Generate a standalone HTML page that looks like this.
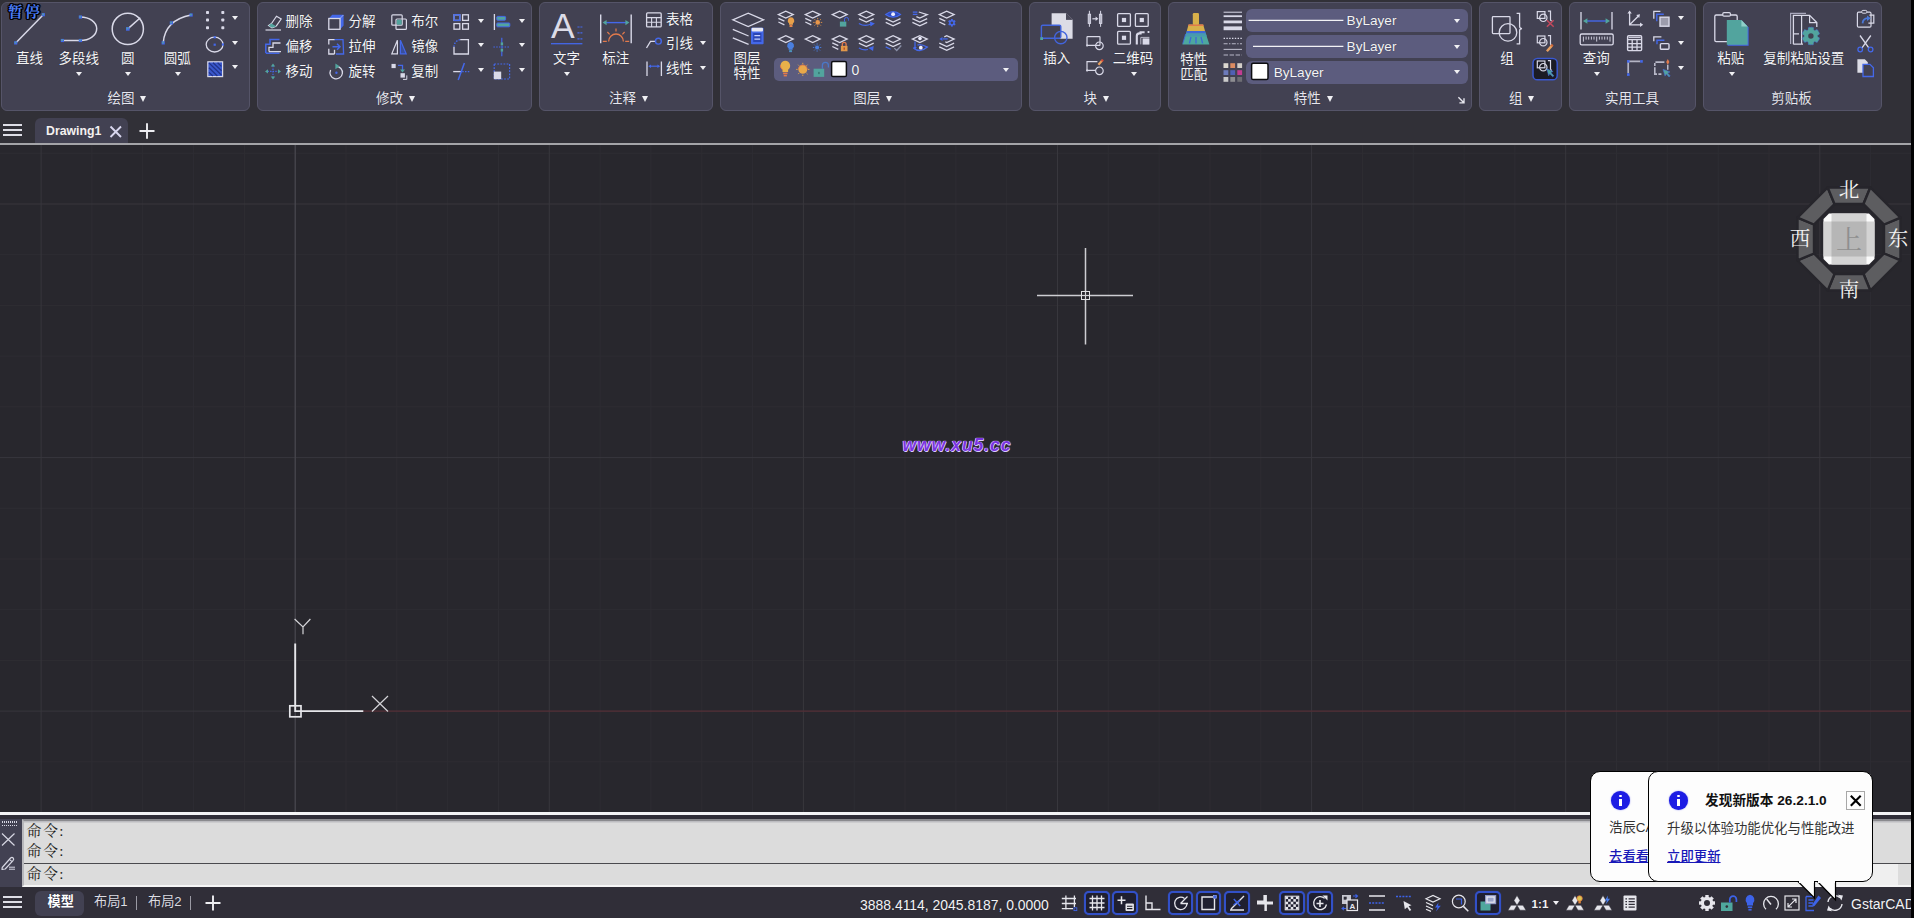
<!DOCTYPE html><html lang="zh-CN"><head><meta charset="utf-8"><title>GstarCAD - Drawing1</title><style>
*{box-sizing:border-box;margin:0;padding:0}
html,body{width:1914px;height:918px;overflow:hidden;background:#313037;}
body{position:relative;font-family:"Liberation Sans","Noto Sans CJK SC",sans-serif;color:#f2f2f4;font-size:13.5px;}
.abs{position:absolute}
.panel{position:absolute;top:2px;height:109px;background:#424152;border:1px solid #555468;border-radius:6px;}
.t{position:absolute;white-space:nowrap;line-height:16px;height:16px;color:#f4f4f6;font-size:13.5px;text-shadow:0 0 1px rgba(20,20,30,.6);}
.tc{transform:translateX(-50%);}
.arr{position:absolute;width:0;height:0;border-left:3.5px solid transparent;border-right:3.5px solid transparent;border-top:4px solid #f0f0f4;}
.arrb{position:absolute;width:0;height:0;border-left:3.4px solid transparent;border-right:3.4px solid transparent;border-top:6.2px solid #f0f0f4;}
svg{position:absolute;overflow:visible}
.combo{position:absolute;background:#5c5c7e;border-radius:5px;}
</style></head><body>
<div class="abs" style="left:0;top:0;width:1914px;height:116px;background:#313037"></div>
<div class="panel" style="left:1px;width:249px"></div>
<div class="panel" style="left:257px;width:275px"></div>
<div class="panel" style="left:539px;width:174px"></div>
<div class="panel" style="left:720px;width:302px"></div>
<div class="panel" style="left:1029px;width:132px"></div>
<div class="panel" style="left:1168px;width:304px"></div>
<div class="panel" style="left:1479px;width:83px"></div>
<div class="panel" style="left:1569px;width:127px"></div>
<div class="panel" style="left:1703px;width:179px"></div>
<div class="combo" style="left:773.8px;top:58px;width:244.4px;height:23.4px"></div>
<div class="combo" style="left:1246.2px;top:8.9px;width:221.8px;height:23.2px;border-radius:6px"></div>
<div class="combo" style="left:1246.2px;top:34.8px;width:221.8px;height:23.2px;border-radius:6px"></div>
<div class="combo" style="left:1246.2px;top:60.5px;width:221.8px;height:23.2px;border-radius:6px"></div>
<svg style="left:0;top:0" width="1914" height="116" viewBox="0 0 1914 116"><path d="M15.7 42.9L43.3 14.7" stroke="#d9d9e8" stroke-width="1.5" fill="none" /><rect x="14.1" y="41.3" width="3.2" height="3.2" fill="#4468ea"/><rect x="14.7" y="41.699999999999996" width="1.6" height="1.6" fill="#52a49e"/><rect x="41.699999999999996" y="13.1" width="3.2" height="3.2" fill="#4468ea"/><rect x="42.3" y="13.5" width="1.6" height="1.6" fill="#52a49e"/><path d="M62.4 40.5H80.4A16.3 11.75 0 0 0 80.4 17" stroke="#d9d9e8" stroke-width="1.5" fill="none" /><rect x="60.8" y="38.9" width="3.2" height="3.2" fill="#4468ea"/><rect x="61.4" y="39.3" width="1.6" height="1.6" fill="#52a49e"/><rect x="78.80000000000001" y="38.9" width="3.2" height="3.2" fill="#4468ea"/><rect x="79.4" y="39.3" width="1.6" height="1.6" fill="#52a49e"/><rect x="78.80000000000001" y="15.4" width="3.2" height="3.2" fill="#4468ea"/><rect x="79.4" y="15.8" width="1.6" height="1.6" fill="#52a49e"/><circle cx="127.8" cy="28.9" r="15.6" stroke="#d9d9e8" stroke-width="1.5" fill="none" /><path d="M127.8 28.9L140.3 17.7" stroke="#d9d9e8" stroke-width="1.5" fill="none" /><rect x="126.0" y="27.099999999999998" width="3.6" height="3.6" fill="#4468ea"/><rect x="126.6" y="27.499999999999996" width="1.8" height="1.8" fill="#52a49e"/><path d="M163.2 42.9Q165 20 191.1 15" stroke="#d9d9e8" stroke-width="1.5" fill="none" /><rect x="161.6" y="41.3" width="3.2" height="3.2" fill="#4468ea"/><rect x="162.2" y="41.699999999999996" width="1.6" height="1.6" fill="#52a49e"/><rect x="169.8" y="21.299999999999997" width="3.2" height="3.2" fill="#4468ea"/><rect x="170.4" y="21.699999999999996" width="1.6" height="1.6" fill="#52a49e"/><rect x="189.5" y="13.4" width="3.2" height="3.2" fill="#4468ea"/><rect x="190.1" y="13.8" width="1.6" height="1.6" fill="#52a49e"/><rect x="206.0" y="11.0" width="3" height="3" rx=".8" fill="#d9d9e8"/><rect x="206.0" y="18.5" width="3" height="3" rx=".8" fill="#d9d9e8"/><rect x="206.0" y="26.2" width="3" height="3" rx=".8" fill="#d9d9e8"/><rect x="221.3" y="11.0" width="3" height="3" rx=".8" fill="#d9d9e8"/><rect x="221.3" y="18.5" width="3" height="3" rx=".8" fill="#d9d9e8"/><rect x="221.3" y="26.2" width="3" height="3" rx=".8" fill="#d9d9e8"/><ellipse cx="214.6" cy="44.6" rx="8.4" ry="7.4" fill="none" stroke="#d9d9e8" stroke-width="1.3"/><rect x="213.6" y="43.6" width="2.2" height="2.2" fill="#4468ea"/><rect x="213.6" y="36.2" width="2.2" height="2.2" fill="#4468ea"/><rect x="221.8" y="43.4" width="2.2" height="2.2" fill="#4468ea"/><rect x="207.8" y="61.8" width="14.8" height="14.8" fill="#3a58cc" stroke="#d9d9e8" stroke-width="1.2"/><path d="M221.4 66.4L217.6 62.8M221.6 70.8L213 62.8M221.4 75L209 63M217.4 76L209 67.8M212.8 76L209 72.4" stroke="#22338a" stroke-width="1.25" fill="none" /><g transform="translate(265 14) scale(1)"><path d="M6.5 9.5L11.5 2.2L16.2 5L11.2 12.2M6.5 9.5L3.6 11.4L7 13.8L11.2 12.2" stroke="#d9d9e8" stroke-width="1.2" fill="none" /><path d="M3.6 11.4L6.5 9.5L11.2 12.2L7 13.8Z" fill="#52a49e"/><path d="M0.5 16H16" stroke="#d9d9e8" stroke-width="1.2" fill="none" /></g><g transform="translate(265 38.8) scale(1)"><path d="M0.8 14.2V5.5H5V0.8H14.5" stroke="#4468ea" stroke-width="1.5" fill="none" /><path d="M0.8 14.4H14.5" stroke="#4468ea" stroke-width="1.5" fill="none" /><path d="M4 12.8V8.5H8V4.2H15.5M4 12.8H16" stroke="#d9d9e8" stroke-width="1.3" fill="none" /></g><g transform="translate(265 63.400000000000006) scale(1)"><path d="M8 2.5V13.5M2.5 8H13.5" stroke="#4468ea" stroke-width="1.2" fill="none" stroke-dasharray="1.4 1.2"/><path d="M8 0L10.2 3H5.8ZM8 16L10.2 13H5.8ZM0 8L3 5.8V10.2ZM16 8L13 5.8V10.2Z" fill="#52a49e"/></g><g transform="translate(328 14) scale(1)"><path d="M0.8 4.5L4.2 0.8H15.6V11.5L12 15.4V4.5Z" fill="#4468ea"/><path d="M12 4.5L15.4 1" stroke="#9fb2f4" stroke-width="0.9" fill="none" /><rect x="0.8" y="4.5" width="11.2" height="10.8" rx="0" stroke="#d9d9e8" stroke-width="1.3" fill="#424152" /></g><g transform="translate(328 38.8) scale(1)"><path d="M6 0.8H15L15.6 15.2H8" stroke="#4468ea" stroke-width="1.3" fill="none" /><path d="M6.5 0.8H0.8V5.6M0.8 10V15.2H6.5M6.5 11V15.2" stroke="#d9d9e8" stroke-width="1.3" fill="none" /><path d="M4.5 8H11.5M9 5L12 8L9 11" stroke="#4468ea" stroke-width="1.5" fill="none" /></g><g transform="translate(328 63.400000000000006) scale(1)"><path d="M8.2 3A6.2 6.2 0 1 1 2.6 6.6" stroke="#d9d9e8" stroke-width="1.3" fill="none" /><path d="M7.4 0L11.6 2.8L7.4 5.8Z" fill="#52a49e"/><circle cx="8.4" cy="9.4" r="1.2" fill="#4468ea"/></g><g transform="translate(391 14) scale(1)"><rect x="0.8" y="0.8" width="10.4" height="10.4" rx="1" stroke="#d9d9e8" stroke-width="1.2" fill="none" /><rect x="5" y="5" width="10.4" height="10.4" rx="1" stroke="#d9d9e8" stroke-width="1.2" fill="none" /><rect x="5.8" y="5.8" width="4.8" height="4.8" fill="#52a49e"/></g><g transform="translate(391 38.8) scale(1)"><path d="M6.4 1.5V15H0.8Z" stroke="#d9d9e8" stroke-width="1.2" fill="none" /><path d="M9.4 1.5V15H15.2Z" stroke="#4468ea" stroke-width="1.2" fill="#3a4f9c" /></g><g transform="translate(391 63.400000000000006) scale(1)"><rect x="0.5" y="0.5" width="4.2" height="4.2" fill="#d9d9e8"/><rect x="9.5" y="9.8" width="4.4" height="4.4" fill="#d9d9e8"/><path d="M7 2H11.5V7" stroke="#4468ea" stroke-width="1.3" fill="none" /><path d="M9 6L11.5 9L14 6Z" fill="#52a49e"/><path d="M12 16H15.8V12" stroke="#d9d9e8" stroke-width="1" fill="none" /></g><g transform="translate(453.2 14) scale(1)"><rect x="0.8" y="0.8" width="5.8" height="5.6" rx="0" stroke="#d9d9e8" stroke-width="1.3" fill="none" /><rect x="9.4" y="0.8" width="5.8" height="5.6" rx="0" stroke="#d9d9e8" stroke-width="1.3" fill="none" /><rect x="0.8" y="9.6" width="5.8" height="5.6" rx="0" stroke="#d9d9e8" stroke-width="1.3" fill="none" /><rect x="9.4" y="9.6" width="5.8" height="5.6" rx="0" stroke="#d9d9e8" stroke-width="1.3" fill="none" /><rect x="0.8" y="0.8" width="5.8" height="5.6" rx="0" stroke="#4468ea" stroke-width="1.4" fill="none" /></g><g transform="translate(453.2 38.8) scale(1)"><path d="M7 0.8H15.2V15.2H0.8V8" stroke="#d9d9e8" stroke-width="1.3" fill="none" /><path d="M0.8 8A7.2 7.2 0 0 1 7 0.8" stroke="#4468ea" stroke-width="1.3" fill="none" stroke-dasharray="1.6 1.2"/></g><g transform="translate(453.2 63.400000000000006) scale(1)"><path d="M0 8.2H8" stroke="#d9d9e8" stroke-width="1.3" fill="none" /><path d="M9 8.2H16.5" stroke="#4468ea" stroke-width="1.2" fill="none" stroke-dasharray="1.5 1.3"/><path d="M11.2 -0.5L5 16.5" stroke="#4468ea" stroke-width="1.5" fill="none" /></g><g transform="translate(493.4 14) scale(1)"><path d="M1 0V16" stroke="#d9d9e8" stroke-width="1.3" fill="none" /><rect x="3.4" y="2.4" width="8.8" height="3.8" rx=".8" fill="#52a49e" stroke="#4468ea" stroke-width="1"/><rect x="3.4" y="9" width="13" height="3.8" rx=".8" fill="#52a49e" stroke="#4468ea" stroke-width="1"/></g><g transform="translate(493.4 38.8) scale(1)"><path d="M0 8.2H16.6" stroke="#4468ea" stroke-width="1.1" fill="none" stroke-dasharray="1.5 1.3"/><path d="M8.4 -1V4M8.4 12.4V17.5" stroke="#4468ea" stroke-width="1.2" fill="none" /><rect x="7.3" y="3.6" width="2.4" height="3" fill="#52a49e"/><rect x="7.3" y="9.8" width="2.4" height="3" fill="#52a49e"/><path d="M8.5 6.8V9.6" stroke="#4468ea" stroke-width="1" fill="none" /></g><g transform="translate(493.4 63.400000000000006) scale(1)"><rect x="0.8" y="0.6" width="15.4" height="15" rx="0" stroke="#4468ea" stroke-width="1.2" fill="none" stroke-dasharray="1.8 1.3"/><rect x="0.4" y="8.2" width="7.4" height="7.6" fill="#d9d9e8"/></g><path d="M577.4 27H582.4M577.4 32.8H582.4M577.4 38.8H582.4" stroke="#4468ea" stroke-width="1.2" fill="none" stroke-dasharray="2.2 0.8"/><path d="M551 43.7H582.4" stroke="#4468ea" stroke-width="1.3" fill="none" /><path d="M600.7 14.4V43.2M631.2 14.4V43.2" stroke="#d9d9e8" stroke-width="1.4" fill="none" /><path d="M605 22.6H627" stroke="#4468ea" stroke-width="1.4" fill="none" /><path d="M602.6 22.6L606.6 20V25.2ZM629.4 22.6L625.4 20V25.2Z" fill="#52a49e"/><path d="M608.6 41.4A7.4 7.4 0 0 1 623.4 41.4" stroke="#e27a4c" stroke-width="1.3" fill="none" /><path d="M616 28.6V31.6M607.4 32L609.6 34.4M624.6 32L622.4 34.4M602.8 41.4H606.8M625.2 41.4H629.2" stroke="#e27a4c" stroke-width="1.2" fill="none" /><rect x="646.6" y="12.9" width="14.6" height="14" rx="1" stroke="#d9d9e8" stroke-width="1.3" fill="none" /><path d="M646.6 17.6H661.2M646.6 22.2H661.2M651.6 17.6V26.9M656.4 17.6V26.9" stroke="#d9d9e8" stroke-width="1.1" fill="none" /><path d="M646.5 48L650.5 41.4H656" stroke="#d9d9e8" stroke-width="1.3" fill="none" /><circle cx="658.4" cy="41.2" r="2.9" stroke="#4468ea" stroke-width="1.4" fill="none" /><path d="M647 61.5V76M661.4 61.5V76" stroke="#d9d9e8" stroke-width="1.3" fill="none" /><path d="M650 66.2H658.4" stroke="#4468ea" stroke-width="1.2" fill="none" /><path d="M648.2 66.2L651 64.4V68ZM660.2 66.2L657.4 64.4V68Z" fill="#4468ea"/><path d="M732.8 19.8L748.2 13.2L763.6 19.8L748.2 26.6Z" stroke="#d9d9e8" stroke-width="1.3" fill="none" /><path d="M732.8 29.4L748.6 36M732.8 37.8L748.6 44.4" stroke="#d9d9e8" stroke-width="1.3" fill="none" /><rect x="751" y="27.8" width="12.6" height="16.4" rx="1" fill="#4468ea"/><rect x="751.6" y="27.8" width="11.4" height="3.6" rx="1" fill="#e8e8f2"/><rect x="753.2" y="33" width="8.2" height="9" fill="#2b45b5"/><path d="M754.4 35.6H760.2M754.4 39.2H760.2" stroke="#c8d2ff" stroke-width="1.2" fill="none" /><g transform="translate(786.4 19) scale(1)"><path d="M-8 -4.4L-0.6 -7.8L6.8 -4.4L-0.6 -1Z" stroke="#d9d9e8" stroke-width="1.3" fill="none" /><path d="M-8 -0.6L-2 2.2M-8 3L-2 5.8" stroke="#d9d9e8" stroke-width="1.3" fill="none" /><g transform="translate(4.6 3.2) scale(1.15)"><path d="M0 -4.2A2.9 2.9 0 0 1 1.7 1V2.2H-1.7V1A2.9 2.9 0 0 1 0 -4.2Z" fill="#e8a04a"/><rect x="-1.2" y="2.8" width="2.4" height="1.4" fill="#e8a04a"/></g><rect x="3.4" y="6" width="2.4" height="1.6" fill="#e27a4c"/></g><g transform="translate(813.3 19) scale(1)"><path d="M-8 -4.4L-0.6 -7.8L6.8 -4.4L-0.6 -1Z" stroke="#d9d9e8" stroke-width="1.3" fill="none" /><path d="M-8 -0.6L-2 2.2M-8 3L-2 5.8" stroke="#d9d9e8" stroke-width="1.3" fill="none" /><g transform="translate(4.4 3.4) scale(1)"><circle r="2.3" fill="#e8964a"/><path d="M3.10 0.00L4.50 0.00M2.19 2.19L3.18 3.18M0.00 3.10L0.00 4.50M-2.19 2.19L-3.18 3.18M-3.10 0.00L-4.50 0.00M-2.19 -2.19L-3.18 -3.18M-0.00 -3.10L-0.00 -4.50M2.19 -2.19L3.18 -3.18" stroke="#e8964a" stroke-width="0.9" fill="none" /></g></g><g transform="translate(840.3 19) scale(1)"><path d="M-8 -4.4L-0.6 -7.8L6.8 -4.4L-0.6 -1Z" stroke="#d9d9e8" stroke-width="1.3" fill="none" /><rect x="-0.4" y="2.6" width="6.4" height="5" fill="#52a49e"/><path d="M4.2 2.6V0.4A2 2 0 0 1 8.2 0.4V1.6" stroke="#4468ea" stroke-width="1" fill="none" /></g><g transform="translate(866.9 19) scale(1)"><path d="M-8 -4.4L-0.6 -7.8L6.8 -4.4L-0.6 -1Z" stroke="#d9d9e8" stroke-width="1.3" fill="none" /><path d="M-8 -0.4L-0.6 3L6.8 -0.4" stroke="#d9d9e8" stroke-width="1.3" fill="none" /><path d="M-8 4.4Q-2 8 4 5" stroke="#4468ea" stroke-width="1.2" fill="none" /><path d="M3 2.4L8 4.4L3.6 7.4Z" fill="#4468ea"/></g><g transform="translate(893.7 19) scale(1)"><path d="M-8 -4.6Q-0.6 -10.4 6.8 -4.6Q-0.6 1 -8 -4.6Z" stroke="#4468ea" stroke-width="1.2" fill="#2f4cc0" /><circle cx="-0.6" cy="-4.8" r="1.9" fill="#eef"/><path d="M-8 -0.4L-0.6 3L6.8 -0.4M-8 3.4L-0.6 6.8L6.8 3.4" stroke="#d9d9e8" stroke-width="1.3" fill="none" /></g><g transform="translate(920.4 19) scale(1)"><path d="M-7.6 -6.8H-3M-7.6 -4.6H-3" stroke="#4468ea" stroke-width="1.3" fill="none" /><path d="M-1.6 -7L6.8 -4.4L-0.6 -1L-4 -2.4" stroke="#d9d9e8" stroke-width="1.3" fill="none" /><path d="M-8 -0.4L-0.6 3L6.8 -0.4M-8 3.4L-0.6 6.8L6.8 3.4" stroke="#d9d9e8" stroke-width="1.3" fill="none" /></g><g transform="translate(947.3 19) scale(1)"><path d="M-8 -4.4L-0.6 -7.8L6.8 -4.4L-0.6 -1Z" stroke="#d9d9e8" stroke-width="1.3" fill="none" /><path d="M-8 -0.6L-2 2.2M-8 3L-2 5.8" stroke="#d9d9e8" stroke-width="1.3" fill="none" /><g transform="translate(4.6 3.8) scale(1)"><rect x="-0.9" y="-3.8" width="1.8" height="2" fill="#4468ea" transform="rotate(0)"/><rect x="-0.9" y="-3.8" width="1.8" height="2" fill="#4468ea" transform="rotate(60)"/><rect x="-0.9" y="-3.8" width="1.8" height="2" fill="#4468ea" transform="rotate(120)"/><rect x="-0.9" y="-3.8" width="1.8" height="2" fill="#4468ea" transform="rotate(180)"/><rect x="-0.9" y="-3.8" width="1.8" height="2" fill="#4468ea" transform="rotate(240)"/><rect x="-0.9" y="-3.8" width="1.8" height="2" fill="#4468ea" transform="rotate(300)"/><circle r="2.1" fill="none" stroke="#4468ea" stroke-width="1.4"/></g></g><g transform="translate(786.4 43.5) scale(1)"><path d="M-8 -4.4L-0.6 -7.8L6.8 -4.4L-0.6 -1Z" stroke="#d9d9e8" stroke-width="1.3" fill="none" /><g transform="translate(4.2 3.6) scale(1.2)"><path d="M0 -4.2A2.9 2.9 0 0 1 1.7 1V2.2H-1.7V1A2.9 2.9 0 0 1 0 -4.2Z" fill="#4a7fe0"/><rect x="-1.2" y="2.8" width="2.4" height="1.4" fill="#4a7fe0"/></g><rect x="3" y="6.8" width="2.4" height="1.2" fill="#52a49e"/></g><g transform="translate(813.3 43.5) scale(1)"><path d="M-8 -4.4L-0.6 -7.8L6.8 -4.4L-0.6 -1Z" stroke="#d9d9e8" stroke-width="1.3" fill="none" /><g transform="translate(3.8 4) scale(1)"><circle r="2" fill="#4a7fe0"/><path d="M2.80 0.00L4.20 0.00M1.98 1.98L2.97 2.97M0.00 2.80L0.00 4.20M-1.98 1.98L-2.97 2.97M-2.80 0.00L-4.20 0.00M-1.98 -1.98L-2.97 -2.97M-0.00 -2.80L-0.00 -4.20M1.98 -1.98L2.97 -2.97" stroke="#4a7fe0" stroke-width="0.9" fill="none" /></g></g><g transform="translate(840.3 43.5) scale(1)"><path d="M-8 -4.4L-0.6 -7.8L6.8 -4.4L-0.6 -1Z" stroke="#d9d9e8" stroke-width="1.3" fill="none" /><path d="M-8 -0.6L-2 2.2M-8 3L-2 5.8" stroke="#d9d9e8" stroke-width="1.3" fill="none" /><rect x="0.6" y="2.4" width="6.6" height="5.4" fill="#e0984a"/><path d="M2 2.4V0.8A1.9 1.9 0 0 1 5.8 0.8V2.4" stroke="#e27a4c" stroke-width="1.3" fill="none" /><rect x="3.3" y="4" width="1.2" height="2.2" fill="#b04020"/></g><g transform="translate(866.9 43.5) scale(1)"><path d="M-8 -4.4L-0.6 -7.8L6.8 -4.4L-0.6 -1Z" stroke="#d9d9e8" stroke-width="1.3" fill="none" /><path d="M-8 -0.4L-0.6 3L6.8 -0.4" stroke="#d9d9e8" stroke-width="1.3" fill="none" /><path d="M-8 4.4Q-3 7.4 1 6" stroke="#4468ea" stroke-width="1.2" fill="none" /><path d="M6.8 2.6L1.4 4.6L6.2 7.6Z" fill="#4468ea"/></g><g transform="translate(893.7 43.5) scale(1)"><path d="M-8 -4.4L-0.6 -7.8L6.8 -4.4L-0.6 -1Z" stroke="#d9d9e8" stroke-width="1.3" fill="none" /><path d="M-8 -0.4L-0.6 3L6.8 -0.4" stroke="#d9d9e8" stroke-width="1.3" fill="none" /><path d="M-8 3.4L-3 5.8" stroke="#4468ea" stroke-width="1.2" fill="none" /><path d="M0.6 4.6L3 7L7.6 2" stroke="#8a90a8" stroke-width="1.3" fill="none" /></g><g transform="translate(920.4 43.5) scale(1)"><path d="M-8 -4.4L-0.6 -7.8L6.8 -4.4L-0.6 -1Z" stroke="#d9d9e8" stroke-width="1.3" fill="none" /><circle cx="-0.4" cy="-5" r="1.8" fill="#eef"/><path d="M-5.4 -2V4" stroke="#4468ea" stroke-width="1.3" fill="none" /><path d="M-5.4 6L-7.2 3.4H-3.6Z" fill="#4468ea"/><path d="M-7 4.4Q-0.4 10 7 3.6Q0 0 -3 1.6" stroke="#4468ea" stroke-width="1.3" fill="none" /><circle cx="0.4" cy="4.2" r="1.9" fill="#eef"/></g><g transform="translate(947.3 43.5) scale(1)"><path d="M-3 -6.6L-0.6 -7.8L6.8 -4.4L-0.6 -1L-2 -1.8" stroke="#d9d9e8" stroke-width="1.3" fill="none" /><path d="M-4.4 -4.6H0.4" stroke="#4468ea" stroke-width="1.3" fill="none" /><path d="M-8 -4.6L-4.8 -6.6V-2.6Z" fill="#4468ea"/><path d="M-8 -0.4L-0.6 3L6.8 -0.4M-8 3.4L-0.6 6.8L6.8 3.4" stroke="#d9d9e8" stroke-width="1.3" fill="none" /></g><g transform="translate(785.3 68.6) scale(1)"><path d="M0 -7.8A5 5 0 0 1 2.8 1.2V3.4H-2.8V1.2A5 5 0 0 1 0 -7.8Z" fill="#e8b04a"/><path d="M-2.8 1.2Q-5 -1 -4.9 -3.4" stroke="#e27a4c" stroke-width="1" fill="none"/><rect x="-2.2" y="4" width="4.4" height="1.6" fill="#e27a4c"/><rect x="-1.6" y="6.2" width="3.2" height="1.6" fill="#e27a4c"/></g><g transform="translate(802.8 69.4) scale(1)"><circle r="4.4" fill="#e8a84a"/><path d="M5.20 0.00L6.60 0.00M3.68 3.68L4.67 4.67M0.00 5.20L0.00 6.60M-3.68 3.68L-4.67 4.67M-5.20 0.00L-6.60 0.00M-3.68 -3.68L-4.67 -4.67M-0.00 -5.20L-0.00 -6.60M3.68 -3.68L4.67 -4.67" stroke="#e8a84a" stroke-width="0.9" fill="none" /></g><path d="M798.4 69.4A4.4 4.4 0 0 1 807.2 69.4" stroke="#e27a4c" stroke-width="0.9" fill="none" /><g transform="translate(821 69.5) scale(1)"><rect x="-7.4" y="-0.8" width="10.6" height="8.2" fill="#52a49e"/><rect x="-3" y="2.4" width="1.8" height="2.2" fill="#3a7f78"/><path d="M1.4 -0.8V-4.2A3 3 0 0 1 7.4 -4.2V-2" stroke="#4a78c8" stroke-width="1.3" fill="none" /></g><rect x="831.6" y="61.6" width="14.8" height="15" rx="1.4" fill="#fff" stroke="#0c0c10" stroke-width="1.5"/><path d="M1051.6 13.2H1066L1072.6 19.8V38.8H1051.6Z" fill="#dcdce6"/><path d="M1066 13.2V19.8H1072.6Z" fill="#424152"/><path d="M1066.2 13.8V19.6H1072Z" fill="#4c4b5a"/><rect x="1041.4" y="25.2" width="19.4" height="13" rx="1.4" fill="#424152" stroke="#4264dc" stroke-width="1.4"/><circle cx="1060.8" cy="37.6" r="6.2" stroke="#4264dc" stroke-width="1.4" fill="#424152" fill-opacity=".0"/><rect x="1040.2" y="37.2" width="2.8" height="2.8" fill="#52a49e"/><g transform="translate(1095 18.8) scale(1)"><path d="M-5.6 -8V8M5.6 -8V8" stroke="#d9d9e8" stroke-width="1" fill="none" /><rect x="-6.8" y="-4.6" width="2.4" height="9.2" rx="0" stroke="#d9d9e8" stroke-width="0.9" fill="#b8b8c8" /><rect x="4.4" y="-4.6" width="2.4" height="9.2" rx="0" stroke="#d9d9e8" stroke-width="0.9" fill="#b8b8c8" /><path d="M-2.6 0H1.4" stroke="#d9d9e8" stroke-width="1.2" fill="none" /><path d="M3.4 0L0.6 -2.2V2.2Z" fill="#d9d9e8"/></g><g transform="translate(1095 42.6) scale(1)"><rect x="-8" y="-6" width="13" height="8.8" rx="0.6" stroke="#d9d9e8" stroke-width="1.2" fill="none" /><circle cx="4.4" cy="3.2" r="3.8" stroke="#d9d9e8" stroke-width="1.2" fill="none" /><rect x="-8.8" y="2" width="1.8" height="1.8" fill="#d9d9e8"/></g><g transform="translate(1095 67.6) scale(1)"><path d="M2.4 -6H-8V2.8H0.6" stroke="#d9d9e8" stroke-width="1.2" fill="none" /><circle cx="4.4" cy="3.2" r="3.8" stroke="#d9d9e8" stroke-width="1.2" fill="none" /><rect x="-8.8" y="2" width="1.8" height="1.8" fill="#d9d9e8"/><path d="M3.4 -2.8L7.4 -7.4" stroke="#e8a060" stroke-width="2.2" fill="none" /><path d="M6.6 -6.4L8 -8" stroke="#d04a3a" stroke-width="2.2" fill="none" /></g><rect x="1117.6" y="13.6" width="12.8" height="12.8" rx="1" stroke="#d9d9e8" stroke-width="1.3" fill="none" /><rect x="1121.8999999999999" y="17.9" width="4.2" height="4.2" fill="#d9d9e8"/><rect x="1135.4" y="13.6" width="12.8" height="12.8" rx="1" stroke="#d9d9e8" stroke-width="1.3" fill="none" /><rect x="1139.7" y="17.9" width="4.2" height="4.2" fill="#d9d9e8"/><rect x="1117.6" y="31.4" width="12.8" height="12.8" rx="1" stroke="#d9d9e8" stroke-width="1.3" fill="none" /><rect x="1121.8999999999999" y="35.699999999999996" width="4.2" height="4.2" fill="#d9d9e8"/><path d="M1136.8 44.4V36Q1136.8 33.4 1139.4 33.4H1140.6V32.2H1144.6M1147.6 32H1149.4" stroke="#d9d9e8" stroke-width="2.1" fill="none" /><rect x="1142.6" y="38.4" width="6.8" height="6.2" fill="#d9d9e8"/><path d="M1140.8 44.4V37.4H1149.4" stroke="#b8b8c8" stroke-width="1" fill="none" /><rect x="1192.8" y="13" width="6.2" height="12" rx="1.2" fill="#d8b04a"/><path d="M1188.6 24.6H1203.2L1205 31H1186.8Z" fill="#d8b04a"/><path d="M1188.6 24.6H1203.2L1203.6 26H1188.2Z" fill="#e27a4c"/><path d="M1186.8 31H1205L1209.4 44.4H1182.4Z" fill="#4da8a0"/><path d="M1186.8 31H1205L1205.8 33.4H1186Z" fill="#3f68d8"/><path d="M1186 33.4H1205.8L1206.8 36.4H1185Z" fill="#479ab0"/><path d="M1191 37L1189.4 43.4M1196 37V43.4M1201 37L1202.6 43.4" stroke="#3f68d8" stroke-width="1.3" fill="none" /><path d="M1185.6 34L1182.8 43.6" stroke="#3f68d8" stroke-width="0.9" fill="none" /><rect x="1223.6" y="11.7" width="18.4" height="1" fill="#d9d9e8"/><rect x="1223.6" y="15.3" width="18.4" height="1.8" fill="#d9d9e8"/><rect x="1223.6" y="20.5" width="18.4" height="2.8" fill="#d9d9e8"/><rect x="1223.6" y="26.4" width="18.4" height="3.8" fill="#d9d9e8"/><path d="M1223.6 38.4H1242" stroke="#d9d9e8" stroke-width="1.1" fill="none" stroke-dasharray="1.4 1.4"/><path d="M1223.6 43.7H1242" stroke="#b8b8c8" stroke-width="1.1" fill="none" stroke-dasharray="4 1.4 1.4 1.4"/><path d="M1223.6 49.4H1242" stroke="#b8b8c8" stroke-width="1.1" fill="none" /><path d="M1223.6 55H1242" stroke="#b8b8c8" stroke-width="1.1" fill="none" stroke-dasharray="4.4 1.6"/><rect x="1223.5" y="63.199999999999996" width="4.8" height="4.8" fill="#dcd8d0"/><rect x="1230.3" y="63.199999999999996" width="4.8" height="4.8" fill="#dc8c62"/><rect x="1237.3" y="63.199999999999996" width="4.8" height="4.8" fill="#d2cec8"/><rect x="1223.5" y="70.19999999999999" width="4.8" height="4.8" fill="#6c7aba"/><rect x="1230.3" y="70.19999999999999" width="4.8" height="4.8" fill="#5060b4"/><rect x="1237.3" y="70.19999999999999" width="4.8" height="4.8" fill="#c23c92"/><rect x="1223.5" y="77.0" width="4.8" height="4.8" fill="#cacaca"/><rect x="1230.3" y="77.0" width="4.8" height="4.8" fill="#8e8e92"/><rect x="1237.3" y="77.0" width="4.8" height="4.8" fill="#6e6e74"/><path d="M1248.6 20.3H1343.4M1253 46.3H1343.4" stroke="#f2f2f6" stroke-width="1.2" fill="none" /><rect x="1251.6" y="63.2" width="16.4" height="16.4" rx="1.6" fill="#fff" stroke="#0c0c10" stroke-width="1.5"/><path d="M1458.4 97.2L1463.6 102.4M1464 98.2V102.8H1459.4" stroke="#e8e8f0" stroke-width="1.35" fill="none" /><rect x="1492.4" y="16.6" width="17.6" height="17" rx="0.8" stroke="#d9d9e8" stroke-width="1.3" fill="none" /><circle cx="1508" cy="32.4" r="8.8" stroke="#d9d9e8" stroke-width="1.3" fill="none" /><path d="M1516.6 13.4H1519.6V26.6Q1519.6 28.4 1522 28.6Q1519.6 28.8 1519.6 30.6V43.8H1516.6" stroke="#d9d9e8" stroke-width="1.3" fill="none" /><g transform="translate(1545.3 18.8) scale(1)"><rect x="-8" y="-7.2" width="7.6" height="6.8" rx="0" stroke="#d9d9e8" stroke-width="1.2" fill="none" /><circle cx="-2" cy="-1" r="3.7" stroke="#d9d9e8" stroke-width="1.2" fill="none" /><path d="M2.6 -7.6H5.2V0.6Q5.2 2 6.6 2.2" stroke="#d9d9e8" stroke-width="1.2" fill="none" /><path d="M1.6 1.4L8.4 8M8.4 1.4L1.6 8" stroke="#c4485c" stroke-width="1.5" fill="none" /></g><g transform="translate(1545.3 43.2) scale(1)"><rect x="-8" y="-7.2" width="7.6" height="6.8" rx="0" stroke="#d9d9e8" stroke-width="1.2" fill="none" /><circle cx="-2" cy="-1" r="3.7" stroke="#d9d9e8" stroke-width="1.2" fill="none" /><path d="M2.6 -7.6H5.2V0.6Q5.2 2 6.6 2.2" stroke="#d9d9e8" stroke-width="1.2" fill="none" /><path d="M1.6 8L6.6 2.4" stroke="#e8a060" stroke-width="2.4" fill="none" /><path d="M6 3L7.4 1.4" stroke="#d06a3a" stroke-width="2.4" fill="none" /></g><rect x="1533" y="58.6" width="24.2" height="21.2" rx="4.4" fill="#1b1b24" stroke="#3a58d0" stroke-width="1.5"/><g transform="translate(1545.3 68.2) scale(1)"><rect x="-8" y="-7.2" width="7.6" height="6.8" rx="0" stroke="#d9d9e8" stroke-width="1.2" fill="none" /><circle cx="-2" cy="-1" r="3.7" stroke="#d9d9e8" stroke-width="1.2" fill="none" /><path d="M2.6 -7.6H5.2V0.6Q5.2 2 6.6 2.2" stroke="#d9d9e8" stroke-width="1.2" fill="none" /><path d="M1.4 0.6L7.8 3.2L5.6 4.4L8.6 7.6L7.4 8.6L4.4 5.6L3.4 7.6Z" fill="#52a49e" stroke="#4468ea" stroke-width=".5"/></g><path d="M1581 11.9V29.4M1612 11.9V29.4" stroke="#d9d9e8" stroke-width="1.3" fill="none" /><path d="M1585 21H1608" stroke="#4468ea" stroke-width="1.4" fill="none" /><path d="M1583 21L1587.4 18.2V23.8ZM1610 21L1605.6 18.2V23.8Z" fill="#52a49e"/><rect x="1580.2" y="34" width="33" height="10.8" rx="1.6" stroke="#d9d9e8" stroke-width="1.3" fill="none" /><path d="M1583.4 36.6V41.6M1586.1 36.6V39.6M1588.7 36.6V39.6M1591.4 36.6V39.6M1594.0 36.6V39.6M1596.7 36.6V41.6M1599.4 36.6V39.6M1602.0 36.6V39.6M1604.7 36.6V39.6M1607.3 36.6V39.6M1610.0 36.6V41.6" stroke="#d9d9e8" stroke-width="0.9" fill="none" /><g transform="translate(1634.6 18.8) scale(1)"><path d="M-5 -6V6H6.4M-5 6L3.6 -2.6" stroke="#d9d9e8" stroke-width="1.3" fill="none" /><path d="M-5 -8.4L-2.8 -5.2H-7.2ZM8.6 6L5.4 3.8V8.2ZM5.4 -4.6L4.6 -0.8L1.6 -3.8Z" fill="#d9d9e8"/></g><g transform="translate(1634.6 43.2) scale(1)"><rect x="-7" y="-7.4" width="14" height="14.8" rx="1" stroke="#d9d9e8" stroke-width="1.4" fill="none" /><path d="M-7 -3.6H7M-7 0.4H7M-7 4H7M-2.4 -3.6V7.4M2.4 -3.6V7.4" stroke="#d9d9e8" stroke-width="1.3" fill="none" /><path d="M-6 -5.6H6" stroke="#d9d9e8" stroke-width="1" fill="none" /></g><g transform="translate(1634.6 67.7) scale(1)"><path d="M-6.4 5.6V-6.4H5.6" stroke="#b4b4c4" stroke-width="1.7" fill="none" /><rect x="-7.6" y="-7.6" width="2.6" height="2.6" fill="#4468ea"/><rect x="5.6" y="-7.6" width="2.6" height="2.6" fill="#4468ea"/><rect x="-7.6" y="5.6" width="2.6" height="2.6" fill="#4468ea"/></g><g transform="translate(1661.4 18.8) scale(1)"><path d="M-7.6 0V-7.4H-1" stroke="#d9d9e8" stroke-width="1.3" fill="none" /><path d="M-4.6 2.4V-4.6H2.4" stroke="#4468ea" stroke-width="1.4" fill="none" /><rect x="-1.4" y="-1.6" width="9" height="9" rx="0" stroke="#d9d9e8" stroke-width="1.4" fill="#9c9cac" /></g><g transform="translate(1661.4 43.2) scale(1)"><path d="M-7.6 -2V-6.4H0" stroke="#d9d9e8" stroke-width="1.3" fill="none" /><path d="M-4.4 1V-3H3" stroke="#4468ea" stroke-width="1.4" fill="none" /><rect x="-1" y="0.4" width="8.6" height="5.6" rx="1" stroke="#d9d9e8" stroke-width="1.4" fill="none" /></g><g transform="translate(1661.4 67.7) scale(1)"><path d="M3 -5.6H-6.6V6.4H1" stroke="#b8b8c8" stroke-width="1.6" fill="none" stroke-dasharray="9 1.4 3 1.4"/><path d="M6.4 -3V2" stroke="#d9d9e8" stroke-width="1.2" fill="none" /><path d="M6.4 -8.6L8 -5.6L6.4 -3L4.8 -5.6Z" fill="#e27a4c"/><path d="M1.6 1.6L8.6 4.2L6.2 5.4L8.8 8.2L7.6 9.2L5 6.4L3.6 8.4Z" fill="#52a49e" stroke="#4468ea" stroke-width=".5"/></g><rect x="1714.8" y="15" width="22.4" height="26.6" rx="1.4" stroke="#d9d9e8" stroke-width="1.3" fill="none" /><rect x="1722.8" y="12.6" width="7.6" height="3.6" rx="1.2" stroke="#d9d9e8" stroke-width="1.2" fill="#424152" /><path d="M1727.6 20.8H1742L1748.6 27.4V45.8H1727.6Z" fill="#4468ea"/><path d="M1726.8 20H1741.4L1747.6 26.4V44.8H1726.8Z" fill="#52a49e"/><path d="M1741.4 20V26.4H1747.6Z" fill="#8fd0c8"/><path d="M1790.6 44V13.4H1806" stroke="#a8a8bc" stroke-width="1.2" fill="none" /><path d="M1793.4 44.2V15.4H1809.6L1816.8 22.6V27" stroke="#d9d9e8" stroke-width="1.3" fill="none" /><path d="M1809.6 15.4V22.6H1816.8M1801.6 15.4V44.2M1793.4 44.2H1803M1793.4 33.8H1799" stroke="#d9d9e8" stroke-width="1.2" fill="none" /><g transform="translate(1810.9 36) scale(1)"><rect x="-2.7" y="-8.8" width="5.4" height="4.6" rx="1" fill="#52a49e" stroke="#4468ea" stroke-width=".6" stroke-dasharray="1 .8" transform="rotate(0)"/><rect x="-2.7" y="-8.8" width="5.4" height="4.6" rx="1" fill="#52a49e" stroke="#4468ea" stroke-width=".6" stroke-dasharray="1 .8" transform="rotate(60)"/><rect x="-2.7" y="-8.8" width="5.4" height="4.6" rx="1" fill="#52a49e" stroke="#4468ea" stroke-width=".6" stroke-dasharray="1 .8" transform="rotate(120)"/><rect x="-2.7" y="-8.8" width="5.4" height="4.6" rx="1" fill="#52a49e" stroke="#4468ea" stroke-width=".6" stroke-dasharray="1 .8" transform="rotate(180)"/><rect x="-2.7" y="-8.8" width="5.4" height="4.6" rx="1" fill="#52a49e" stroke="#4468ea" stroke-width=".6" stroke-dasharray="1 .8" transform="rotate(240)"/><rect x="-2.7" y="-8.8" width="5.4" height="4.6" rx="1" fill="#52a49e" stroke="#4468ea" stroke-width=".6" stroke-dasharray="1 .8" transform="rotate(300)"/><circle r="4.7" fill="none" stroke="#52a49e" stroke-width="4"/></g><g transform="translate(1865.4 18.8) scale(1)"><rect x="-8" y="-6.6" width="13.6" height="15" rx="1.2" stroke="#d9d9e8" stroke-width="1.2" fill="none" /><rect x="-3.6" y="-8.4" width="5" height="2.8" rx="1" stroke="#d9d9e8" stroke-width="1" fill="#424152" /><path d="M4 -3.6H8.4V4.4H3" stroke="#d9d9e8" stroke-width="1.2" fill="none" /><path d="M-2.8 4.6Q-2.6 -0.4 2.6 -0.6" stroke="#4a78d8" stroke-width="1.8" fill="none" /><path d="M1.6 -3.4L5.4 -0.6L1.6 2.2Z" fill="#4a78d8"/></g><g transform="translate(1865.4 43.9) scale(1)"><path d="M-5.4 -8.4L3.4 4M5.4 -8.4L-3.4 4" stroke="#d9d9e8" stroke-width="1.3" fill="none" /><circle cx="-5.2" cy="5.6" r="2.3" stroke="#4468ea" stroke-width="1.3" fill="none" /><circle cx="5.2" cy="5.6" r="2.3" stroke="#4468ea" stroke-width="1.3" fill="none" /></g><g transform="translate(1865.4 67.7) scale(1)"><path d="M-8 -8.4H-0.6L2.4 -5.4V5H-8Z" fill="#dcdce6"/><path d="M-2.4 -3.4H4.6L8 0V8.8H-2.4Z" fill="#424152" stroke="#4468ea" stroke-width="1.3"/></g></svg>
<div class="abs" style="left:551px;top:5.6px;font-size:35.5px;line-height:40px;color:#dcdce8;font-family:'Liberation Sans',sans-serif">A</div>
<div class="t tc" style="left:29.5px;top:51.0px;">直线</div>
<div class="t tc" style="left:78.7px;top:51.0px;">多段线</div>
<div class="t tc" style="left:127.8px;top:51.0px;">圆</div>
<div class="t tc" style="left:177.3px;top:51.0px;">圆弧</div>
<div class="t tc" style="left:566.6px;top:51.0px;">文字</div>
<div class="t tc" style="left:615.8px;top:51.0px;">标注</div>
<div class="t tc" style="left:1056.7px;top:51.0px;">插入</div>
<div class="t tc" style="left:1132.9px;top:51.0px;">二维码</div>
<div class="t tc" style="left:1507px;top:51.0px;">组</div>
<div class="t tc" style="left:1596.2px;top:51.0px;">查询</div>
<div class="t tc" style="left:1730.7px;top:51.0px;">粘贴</div>
<div class="t tc" style="left:1803.7px;top:51.0px;">复制粘贴设置</div>
<div class="arr" style="left:76.2px;top:72.1px"></div>
<div class="arr" style="left:125.19999999999999px;top:72.1px"></div>
<div class="arr" style="left:174.7px;top:72.1px"></div>
<div class="arr" style="left:564.2px;top:72.1px"></div>
<div class="arr" style="left:1130.9px;top:72.1px"></div>
<div class="arr" style="left:1594.1px;top:72.1px"></div>
<div class="arr" style="left:1728.5px;top:72.1px"></div>
<div class="t tc" style="left:747px;top:51.199999999999996px;">图层</div>
<div class="t tc" style="left:747px;top:65.80000000000001px;">特性</div>
<div class="t tc" style="left:1193.8px;top:51.5px;">特性</div>
<div class="t tc" style="left:1193.8px;top:66.60000000000001px;">匹配</div>
<div class="arr" style="left:232.2px;top:16.1px"></div>
<div class="arr" style="left:232.2px;top:40.9px"></div>
<div class="arr" style="left:232.2px;top:65.4px"></div>
<div class="t" style="left:285.4px;top:14.4px;">删除</div>
<div class="t" style="left:285.4px;top:39.199999999999996px;">偏移</div>
<div class="t" style="left:285.4px;top:63.800000000000004px;">移动</div>
<div class="t" style="left:348.6px;top:14.4px;">分解</div>
<div class="t" style="left:348.6px;top:39.199999999999996px;">拉伸</div>
<div class="t" style="left:348.6px;top:63.800000000000004px;">旋转</div>
<div class="t" style="left:411.2px;top:14.4px;">布尔</div>
<div class="t" style="left:411.2px;top:39.199999999999996px;">镜像</div>
<div class="t" style="left:411.2px;top:63.800000000000004px;">复制</div>
<div class="arr" style="left:477.9px;top:18.6px"></div>
<div class="arr" style="left:518.5px;top:18.6px"></div>
<div class="arr" style="left:477.9px;top:43.2px"></div>
<div class="arr" style="left:518.5px;top:43.2px"></div>
<div class="arr" style="left:477.9px;top:67.9px"></div>
<div class="arr" style="left:518.5px;top:67.9px"></div>
<div class="t" style="left:666px;top:11.799999999999999px;">表格</div>
<div class="t" style="left:666px;top:36.0px;">引线</div>
<div class="t" style="left:666px;top:61.300000000000004px;">线性</div>
<div class="arr" style="left:699.9px;top:41px"></div>
<div class="arr" style="left:699.9px;top:65.6px"></div>
<div class="t" style="left:851.4px;top:62.199999999999996px;font-size:14px;">0</div>
<div class="arr" style="left:1002.9px;top:67.9px"></div>
<div class="t" style="left:1346.6px;top:13.000000000000002px;font-size:13.6px;">ByLayer</div>
<div class="t" style="left:1346.6px;top:39.0px;font-size:13.6px;">ByLayer</div>
<div class="t" style="left:1273.7px;top:64.80000000000001px;font-size:13.6px;">ByLayer</div>
<div class="arr" style="left:1453.5px;top:18.6px"></div>
<div class="arr" style="left:1453.5px;top:44.6px"></div>
<div class="arr" style="left:1453.5px;top:70.4px"></div>
<div class="arr" style="left:1678.1px;top:16.4px"></div>
<div class="arr" style="left:1678.1px;top:41px"></div>
<div class="arr" style="left:1678.1px;top:65.7px"></div>
<div class="t tc" style="left:120.89999999999999px;top:91.2px;color:#e6e6ee;">绘图</div>
<div class="arrb" style="left:140.29999999999998px;top:96.2px"></div>
<div class="t tc" style="left:389.54999999999995px;top:91.2px;color:#e6e6ee;">修改</div>
<div class="arrb" style="left:408.90000000000003px;top:96.2px"></div>
<div class="t tc" style="left:622.5px;top:91.2px;color:#e6e6ee;">注释</div>
<div class="arrb" style="left:642.0px;top:96.2px"></div>
<div class="t tc" style="left:866.85px;top:91.2px;color:#e6e6ee;">图层</div>
<div class="arrb" style="left:885.6px;top:96.2px"></div>
<div class="t tc" style="left:1090.25px;top:91.2px;color:#e6e6ee;">块</div>
<div class="arrb" style="left:1102.8999999999999px;top:96.2px"></div>
<div class="t tc" style="left:1307.35px;top:91.2px;color:#e6e6ee;">特性</div>
<div class="arrb" style="left:1326.6px;top:96.2px"></div>
<div class="t tc" style="left:1515.85px;top:91.2px;color:#e6e6ee;">组</div>
<div class="arrb" style="left:1528.3px;top:96.2px"></div>
<div class="t tc" style="left:1632px;top:91.4px;color:#e6e6ee;">实用工具</div>
<div class="t tc" style="left:1791.4px;top:91.4px;color:#e6e6ee;">剪贴板</div>
<div class="abs" style="left:8px;top:0.5px;font-family:'Liberation Serif','Noto Serif CJK SC',serif;font-weight:700;font-size:15px;line-height:22px;color:#4a7cf6;white-space:nowrap;letter-spacing:2px;text-shadow:-1px -1px 0 #000,1px -1px 0 #000,-1px 1px 0 #000,1px 1px 0 #000,0 1.4px 0 #000,0 -1.4px 0 #000,1.4px 0 0 #000,-1.4px 0 0 #000;z-index:5">暂停</div>
<div class="abs" style="left:0;top:116px;width:1914px;height:27px;background:#313037"></div>
<div class="abs" style="left:3px;top:124px;width:18.5px;height:1.8px;background:#dedee6"></div>
<div class="abs" style="left:3px;top:129px;width:18.5px;height:1.8px;background:#dedee6"></div>
<div class="abs" style="left:3px;top:134px;width:18.5px;height:1.8px;background:#dedee6"></div>
<div class="abs" style="left:35px;top:118px;width:93px;height:26px;background:#424152;border-radius:6px 6px 0 0"></div>
<div class="abs" style="left:46px;top:123px;font-weight:bold;font-size:12.3px;line-height:16px;color:#f4f0f0;white-space:nowrap">Drawing1</div>
<svg style="left:108px;top:124px" width="16" height="16" viewBox="0 0 16 16"><path d="M2.5 2.5 L13 13 M13 2.5 L2.5 13" stroke="#d8d6ee" stroke-width="1.9" fill="none"/></svg>
<svg style="left:138px;top:122px" width="18" height="18" viewBox="0 0 18 18"><path d="M1.5 9 H16.5 M9 1.3 V16.7" stroke="#eeeef2" stroke-width="1.9" fill="none"/></svg>
<div class="abs" style="left:0;top:143px;width:1911px;height:2px;background:#a4a4a8"></div>
<svg style="left:0;top:145px" width="1911" height="667" viewBox="0 145 1911 667"><rect x="0" y="145" width="1911" height="667" fill="#28272d"/><path d="M91.9 145V812M142.7 145V812M193.6 145V812M244.4 145V812M346.0 145V812M396.8 145V812M447.7 145V812M498.5 145V812M600.1 145V812M650.9 145V812M701.8 145V812M752.6 145V812M854.2 145V812M905.0 145V812M955.9 145V812M1006.7 145V812M1108.3 145V812M1159.1 145V812M1210.0 145V812M1260.8 145V812M1362.4 145V812M1413.2 145V812M1464.1 145V812M1514.9 145V812M1616.5 145V812M1667.3 145V812M1718.2 145V812M1769.0 145V812M1870.6 145V812M0 761.8H1911M0 660.4H1911M0 609.7H1911M0 559.0H1911M0 508.3H1911M0 406.8H1911M0 356.1H1911M0 305.4H1911M0 254.7H1911M0 153.3H1911" stroke="#2e2d33" stroke-width="1" fill="none"/><path d="M41.1 145V812M295.2 145V812M549.3 145V812M803.4 145V812M1057.5 145V812M1311.6 145V812M1565.7 145V812M1819.8 145V812M0 711.1H1911M0 457.6H1911M0 204.0H1911" stroke="#38373d" stroke-width="1" fill="none"/><path d="M295.2 145V812" stroke="#4c4b52" stroke-width="1" fill="none"/><path d="M363 711.1H1911" stroke="#5c2c34" stroke-width="1" fill="none"/><path d="M295.2 643.5V712M294.3 711.1H363.3" stroke="#e6e6ea" stroke-width="1.9" fill="none"/><rect x="289.8" y="705.8" width="11.2" height="11" stroke="#e6e6ea" stroke-width="1.7" fill="none"/><path d="M294.6 619 L303 627 L310.4 619 M303 627 V634.3" stroke="#d4d4d8" stroke-width="1.2" fill="none"/><path d="M372 696 L388 711.5 M388 696 L372 711.5" stroke="#d4d4d8" stroke-width="1.2" fill="none"/><path d="M1037 295.5H1133M1085.5 248V344.5" stroke="#cdcdd2" stroke-width="1.5" fill="none"/><rect x="1081.5" y="291.5" width="8" height="8" stroke="#e0e0e4" stroke-width="1" fill="#28272d" fill-opacity=".6"/><path d="M1082 295.5H1089M1085.5 292V299" stroke="#d2d2d6" stroke-width="1" fill="none"/></svg>
<div class="abs" style="left:902.4px;top:434px;font:italic bold 17.5px/22px 'Liberation Sans',sans-serif;color:#7a35e0;letter-spacing:0.95px;white-space:nowrap;text-shadow:0 0 1px #e8d8ff,0 0 1px #e8d8ff,0.5px 0.5px 0 #d8c8ff,-0.5px -0.5px 0 #d8c8ff">www.xu5.cc</div>
<svg style="left:1779px;top:169px" width="140" height="140" viewBox="-70 -70 140 140"><polygon points="51.5,-21.3 51.5,21.3 35.0,14.5 35.0,-14.5" fill="#5d5d60" stroke="#26252b" stroke-width="2.4" stroke-linejoin="round"/><polygon points="51.5,21.3 21.3,51.5 14.5,35.0 35.0,14.5" fill="#5d5d60" stroke="#26252b" stroke-width="2.4" stroke-linejoin="round"/><polygon points="21.3,51.5 -21.3,51.5 -14.5,35.0 14.5,35.0" fill="#5d5d60" stroke="#26252b" stroke-width="2.4" stroke-linejoin="round"/><polygon points="-21.3,51.5 -51.5,21.3 -35.0,14.5 -14.5,35.0" fill="#5d5d60" stroke="#26252b" stroke-width="2.4" stroke-linejoin="round"/><polygon points="-51.5,21.3 -51.5,-21.3 -35.0,-14.5 -35.0,14.5" fill="#5d5d60" stroke="#26252b" stroke-width="2.4" stroke-linejoin="round"/><polygon points="-51.5,-21.3 -21.3,-51.5 -14.5,-35.0 -35.0,-14.5" fill="#5d5d60" stroke="#26252b" stroke-width="2.4" stroke-linejoin="round"/><polygon points="-21.3,-51.5 21.3,-51.5 14.5,-35.0 -14.5,-35.0" fill="#5d5d60" stroke="#26252b" stroke-width="2.4" stroke-linejoin="round"/><polygon points="21.3,-51.5 51.5,-21.3 35.0,-14.5 14.5,-35.0" fill="#5d5d60" stroke="#26252b" stroke-width="2.4" stroke-linejoin="round"/><polygon points="-20,-25.5 20,-25.5 25.5,-20 25.5,20 20,25.5 -20,25.5 -25.5,20 -25.5,-20" fill="#fbfbfb"/><rect x="-25.5" y="-17.5" width="51" height="35" fill="#d3d3d3"/><rect x="-17.5" y="-25.5" width="35" height="51" fill="#d3d3d3"/><rect x="-17.5" y="-17.5" width="35" height="35" fill="#b6b6b6"/></svg>
<div class="abs" style="left:1849px;top:240.5px;font-family:'Liberation Serif','Noto Serif CJK SC',serif;font-size:20.5px;line-height:22px;white-space:nowrap;transform:translate(-50%,-50%);color:#8e8e8e;font-size:26px">上</div>
<div class="abs" style="left:1849px;top:190.3px;font-family:'Liberation Serif','Noto Serif CJK SC',serif;font-size:20.5px;line-height:22px;white-space:nowrap;transform:translate(-50%,-50%);color:#f4f4f4">北</div>
<div class="abs" style="left:1849px;top:290px;font-family:'Liberation Serif','Noto Serif CJK SC',serif;font-size:20.5px;line-height:22px;white-space:nowrap;transform:translate(-50%,-50%);color:#f4f4f4">南</div>
<div class="abs" style="left:1800px;top:239.3px;font-family:'Liberation Serif','Noto Serif CJK SC',serif;font-size:20.5px;line-height:22px;white-space:nowrap;transform:translate(-50%,-50%);color:#f4f4f4">西</div>
<div class="abs" style="left:1898px;top:239.2px;font-family:'Liberation Serif','Noto Serif CJK SC',serif;font-size:20.5px;line-height:22px;white-space:nowrap;transform:translate(-50%,-50%);color:#f4f4f4">东</div>
<div class="abs" style="left:1911px;top:0;width:3px;height:918px;background:#020203;z-index:50"></div>
<div class="abs" style="left:0;top:812px;width:1911px;height:3px;background:#f4f4f6"></div>
<div class="abs" style="left:0;top:815px;width:1911px;height:4px;background:#302e38"></div>
<div class="abs" style="left:0;top:819px;width:22px;height:68px;background:#424152"></div>
<div class="abs" style="left:2px;top:821px;width:16px;height:1.5px;background:repeating-linear-gradient(90deg,#d8d8e4 0 1.1px,transparent 1.1px 2px)"></div>
<div class="abs" style="left:2px;top:824.5px;width:16px;height:1.5px;background:repeating-linear-gradient(90deg,#d8d8e4 0 1.1px,transparent 1.1px 2px)"></div>
<svg style="left:0;top:830px" width="22" height="50" viewBox="0 830 22 50"><path d="M2 833.5 L14.5 845.5 M14.5 833.5 L2 845.5" stroke="#d6d6e2" stroke-width="1.2" fill="none"/><path d="M2.2 867.5 L10.6 858 Q12 856.6 13.2 858 Q14.3 859.2 13 860.6 L5.2 869 L2 869.4 Z M9.6 859.4 L11.9 861.6" stroke="#d6d6e2" stroke-width="1.2" fill="none" stroke-linejoin="round"/><path d="M9 867.2H15M9 869.2H15" stroke="#d6d6e2" stroke-width="1" fill="none"/></svg>
<div class="abs" style="left:22px;top:819px;width:1889px;height:68px;background:#dcdcdc;border-top:2px solid #8a8a8e;border-left:2px solid #b8b8bc;border-bottom:2px solid #f6f6f6;box-shadow:inset 0 1.5px 0 #bcbcc0"></div>
<div class="abs" style="left:24px;top:862.5px;width:1887px;height:1.2px;background:#4a4a4e"></div>
<div class="abs" style="left:1600px;top:864px;width:298px;height:21px;background:#efefef"></div>
<div class="abs" style="left:26.5px;top:821.5px;font-family:'Liberation Serif','Noto Serif CJK SC',serif;font-size:15px;line-height:18px;letter-spacing:1.4px;color:#1c1c20;white-space:nowrap;font-weight:400;">命令:</div>
<div class="abs" style="left:26.5px;top:842.1px;font-family:'Liberation Serif','Noto Serif CJK SC',serif;font-size:15px;line-height:18px;letter-spacing:1.4px;color:#1c1c20;white-space:nowrap;font-weight:400;">命令:</div>
<div class="abs" style="left:26.5px;top:865.3px;font-family:'Liberation Serif','Noto Serif CJK SC',serif;font-size:15px;line-height:18px;letter-spacing:1.4px;color:#1c1c20;white-space:nowrap;font-weight:400;">命令:</div>
<div class="abs" style="left:0;top:887px;width:1911px;height:31px;background:#302e38"></div>
<div class="abs" style="left:3px;top:896px;width:19px;height:1.8px;background:#dedee6"></div>
<div class="abs" style="left:3px;top:901px;width:19px;height:1.8px;background:#dedee6"></div>
<div class="abs" style="left:3px;top:906px;width:19px;height:1.8px;background:#dedee6"></div>
<div class="abs" style="left:35px;top:891px;width:49px;height:25px;background:#424152;border-radius:6px"></div>
<div class="t" style="left:47.5px;top:894.1px;font-weight:bold;font-size:13.2px;color:#fff">模型</div>
<div class="t" style="left:94px;top:894.1px;font-size:13.2px;color:#dcdce2">布局1</div>
<div class="t" style="left:148px;top:894.1px;font-size:13.2px;color:#dcdce2">布局2</div>
<div class="abs" style="left:136px;top:896px;width:1.3px;height:14px;background:#9a9aa4"></div>
<div class="abs" style="left:190px;top:896px;width:1.3px;height:14px;background:#9a9aa4"></div>
<svg style="left:204px;top:894px" width="18" height="18" viewBox="0 0 18 18"><path d="M1.5 9 H16.5 M9 1.5 V16.5" stroke="#eeeef2" stroke-width="1.9" fill="none"/></svg>
<div class="t" style="left:860px;top:896.8px;font-size:13.95px;color:#f2f2f4">3888.4114, 2045.8187, 0.0000</div>
<div class="t" style="left:1851px;top:896.2px;font-size:14px;color:#f2f2f4">GstarCAD</div>
<svg style="left:1058.0px;top:892.0px" width="22" height="22" viewBox="-11.0 -11.0 22 22"><path d="M-3.1 -7.6V6.4M5.4 -7.6V4M-7.2 -4.5H7M-7.2 0.5H7M-7.2 5.6H4" stroke="#e6e6ec" stroke-width="1.3" fill="none" /><rect x="5" y="4.8" width="2.8" height="2.8" fill="#302e38" stroke="#3d63e8" stroke-width=".9"/></svg>
<div class="abs" style="left:1084.4px;top:891px;width:25.2px;height:24px;background:#1f1f30;border:2px solid #3250c8;border-radius:5px;box-shadow:0 0 1px #3250c8"></div>
<svg style="left:1086.0px;top:892.0px" width="22" height="22" viewBox="-11.0 -11.0 22 22"><path d="M-4.5 -7.5V7.5M0 -7.5V7.5M4.5 -7.5V7.5M-7.5 -4.5H7.5M-7.5 0H7.5M-7.5 4.5H7.5" stroke="#e6e6ec" stroke-width="1.3" fill="none" /></svg>
<div class="abs" style="left:1112.4px;top:891px;width:25.2px;height:24px;background:#1f1f30;border:2px solid #3250c8;border-radius:5px;box-shadow:0 0 1px #3250c8"></div>
<svg style="left:1114.0px;top:892.0px" width="22" height="22" viewBox="-11.0 -11.0 22 22"><path d="M-7.5 -2.8H0.5M-3.5 -6.8V1.2" stroke="#e6e6ec" stroke-width="1.5" fill="none" /><rect x="0.5" y="0.5" width="8.4" height="7.6" rx="1" fill="#e6e6ec"/><path d="M2 3.2H7.4M2 5.6H7.4" stroke="#1c1c28" stroke-width="1.1" fill="none" /></svg>
<svg style="left:1142.0px;top:892.0px" width="22" height="22" viewBox="-11.0 -11.0 22 22"><path d="M-7 -7.5V6.5H7.5M-7 0H-1V6.5" stroke="#e6e6ec" stroke-width="1.4" fill="none" /></svg>
<div class="abs" style="left:1167.9px;top:891px;width:25.2px;height:24px;background:#1f1f30;border:2px solid #3250c8;border-radius:5px;box-shadow:0 0 1px #3250c8"></div>
<svg style="left:1169.5px;top:892.0px" width="22" height="22" viewBox="-11.0 -11.0 22 22"><path d="M6 0.5A6.2 6.2 0 1 1 3.5 -4.6" stroke="#e6e6ec" stroke-width="1.3" fill="none" /><path d="M-0.5 0.5L6.5 -6.5M-0.5 0.5H7" stroke="#e6e6ec" stroke-width="1.3" fill="none" /></svg>
<div class="abs" style="left:1195.9px;top:891px;width:25.2px;height:24px;background:#1f1f30;border:2px solid #3250c8;border-radius:5px;box-shadow:0 0 1px #3250c8"></div>
<svg style="left:1197.5px;top:892.0px" width="22" height="22" viewBox="-11.0 -11.0 22 22"><path d="M5.5 -4.5V6.5H-7V-6H4" stroke="#e6e6ec" stroke-width="1.4" fill="none" /><rect x="4.6" y="-7.6" width="2.8" height="2.8" fill="#3d63e8" stroke="#9ab0ff" stroke-width=".6"/></svg>
<div class="abs" style="left:1224.4px;top:891px;width:25.2px;height:24px;background:#1f1f30;border:2px solid #3250c8;border-radius:5px;box-shadow:0 0 1px #3250c8"></div>
<svg style="left:1226.0px;top:892.0px" width="22" height="22" viewBox="-11.0 -11.0 22 22"><path d="M-7 7H7M-6 6L7 -7" stroke="#e6e6ec" stroke-width="1.4" fill="none" /><path d="M-3.2 -4L3.2 3M-3.4 2L2.6 -2.6" stroke="#3d63e8" stroke-width="1.5" fill="none" /></svg>
<svg style="left:1254.0px;top:892.0px" width="22" height="22" viewBox="-11.0 -11.0 22 22"><path d="M-1.6 -8H1.9V-1.6H8V1.6H1.9V8H-0.6V1.6H-8V-2.6H-1.6Z" fill="#e6e6ec"/></svg>
<div class="abs" style="left:1279.4px;top:891px;width:25.2px;height:24px;background:#1f1f30;border:2px solid #3250c8;border-radius:5px;box-shadow:0 0 1px #3250c8"></div>
<svg style="left:1281.0px;top:892.0px" width="22" height="22" viewBox="-11.0 -11.0 22 22"><rect x="-6.5" y="-6.5" width="2.6" height="2.6" fill="#e6e6ec"/><rect x="-6.5" y="-1.3" width="2.6" height="2.6" fill="#e6e6ec"/><rect x="-6.5" y="3.9" width="2.6" height="2.6" fill="#e6e6ec"/><rect x="-3.9" y="-3.9" width="2.6" height="2.6" fill="#e6e6ec"/><rect x="-3.9" y="1.3" width="2.6" height="2.6" fill="#e6e6ec"/><rect x="-1.3" y="-6.5" width="2.6" height="2.6" fill="#e6e6ec"/><rect x="-1.3" y="-1.3" width="2.6" height="2.6" fill="#e6e6ec"/><rect x="-1.3" y="3.9" width="2.6" height="2.6" fill="#e6e6ec"/><rect x="1.3" y="-3.9" width="2.6" height="2.6" fill="#e6e6ec"/><rect x="1.3" y="1.3" width="2.6" height="2.6" fill="#e6e6ec"/><rect x="3.9" y="-6.5" width="2.6" height="2.6" fill="#e6e6ec"/><rect x="3.9" y="-1.3" width="2.6" height="2.6" fill="#e6e6ec"/><rect x="3.9" y="3.9" width="2.6" height="2.6" fill="#e6e6ec"/><rect x="-6.8" y="-6.8" width="13.6" height="13.6" fill="none" stroke="#e6e6ec" stroke-width="1"/></svg>
<div class="abs" style="left:1307.4px;top:891px;width:25.2px;height:24px;background:#1f1f30;border:2px solid #3250c8;border-radius:5px;box-shadow:0 0 1px #3250c8"></div>
<svg style="left:1309.0px;top:892.0px" width="22" height="22" viewBox="-11.0 -11.0 22 22"><path d="M4.6 -4.6A6.5 6.5 0 1 0 6.5 1.5" stroke="#e6e6ec" stroke-width="1.3" fill="none" /><path d="M-3.5 0.5H3.5M0 -3V4" stroke="#e6e6ec" stroke-width="1.6" fill="none" /><path d="M2.5 -7.5H7.5V-2.5Z" fill="#e6e6ec"/></svg>
<svg style="left:1338.5px;top:892.0px" width="22" height="22" viewBox="-11.0 -11.0 22 22"><rect x="-8" y="-8" width="9" height="9" fill="#c8c8d0"/><rect x="-6.3" y="-6.3" width="3" height="3" fill="#302e38"/><rect x="-3" y="-3" width="10.5" height="10.5" fill="#302e38" stroke="#e6e6ec" stroke-width="1.2"/><text x="2.3" y="5.6" font-size="8" font-family="Liberation Sans,sans-serif" font-weight="bold" fill="#e6e6ec" text-anchor="middle">A</text><path d="M3 -7H7M5.5 -8.5L7.5 -7L5.5 -5.2M-8 5.5H-4M-6 3.8L-8 5.5L-6 7.2" stroke="#3d63e8" stroke-width="1.1" fill="none" /></svg>
<svg style="left:1366.0px;top:892.0px" width="22" height="22" viewBox="-11.0 -11.0 22 22"><path d="M-8 -7H8M-8 7H8" stroke="#e6e6ec" stroke-width="1.4" fill="none" /><path d="M-8 0H8" stroke="#3d63e8" stroke-width="1.3" fill="none" stroke-dasharray="2 1.2"/></svg>
<svg style="left:1394.0px;top:892.0px" width="22" height="22" viewBox="-11.0 -11.0 22 22"><path d="M-9 -6.5H6" stroke="#3d63e8" stroke-width="1.3" fill="none" stroke-dasharray="2 1.2"/><path d="M-1.5 -2L6.5 2.2L3.6 3.2L6.3 7L4.6 8L2.2 4.2L-0.2 6.3Z" fill="#e6e6ec"/></svg>
<svg style="left:1422.0px;top:892.0px" width="22" height="22" viewBox="-11.0 -11.0 22 22"><path d="M-7 -4.2L0 -7.5L7 -4.2L0 -1Z" stroke="#e6e6ec" stroke-width="1.2" fill="none" /><path d="M-7 -0.5L0 2.6M-7 3L0 6.2M-7 6.2L-2 8.4" stroke="#e6e6ec" stroke-width="1.2" fill="none" /><path d="M5.5 -0.5L2 4.5H4.5L3 8.5L7.8 2.8H5Z" fill="#3d63e8"/></svg>
<svg style="left:1449.0px;top:892.0px" width="22" height="22" viewBox="-11.0 -11.0 22 22"><circle cx="-1.2" cy="-1.5" r="6.4" fill="none" stroke="#e6e6ec" stroke-width="1.2"/><path d="M3.4 3.4L8.3 8.3" stroke="#e6e6ec" stroke-width="1.5" fill="none" /><path d="M-4 -4H1.5V1.5" stroke="#3d63e8" stroke-width="1.2" fill="none" /></svg>
<div class="abs" style="left:1475.4px;top:891px;width:25.2px;height:24px;background:#1f1f30;border:2px solid #3250c8;border-radius:5px;box-shadow:0 0 1px #3250c8"></div>
<svg style="left:1477.0px;top:892.0px" width="22" height="22" viewBox="-11.0 -11.0 22 22"><rect x="-7.5" y="-1.5" width="10" height="9" fill="#4fa79d"/><rect x="-2.6" y="-7.6" width="10.4" height="8.4" fill="#c9ccd8" stroke="#8f9ad0" stroke-width=".8"/><rect x="-0.8" y="-5.8" width="6.8" height="4.8" fill="#9aa3c8" stroke="#eef" stroke-width=".7"/></svg>
<svg style="left:1506.0px;top:892.0px" width="22" height="22" viewBox="-11.0 -11.0 22 22"><path d="M0.00 2.30L2.99 -2.55L0.00 -7.41L-2.99 -2.55ZM-0.00 2.30L2.99 7.15L8.96 7.15L5.98 2.30ZM0.00 2.30L-5.98 2.30L-8.96 7.15L-2.99 7.15Z" fill="#e6e6ec" stroke="#302e38" stroke-width=".45"/></svg>
<div class="t" style="left:1531.6px;top:895.6px;font-size:11.6px;font-weight:bold;color:#f2f2f4">1:1</div>
<div class="arr" style="left:1553.2px;top:901px;border-left-width:3.7px;border-right-width:3.7px;border-top-width:4.9px"></div>
<svg style="left:1564.0px;top:892.0px" width="22" height="22" viewBox="-11.0 -11.0 22 22"><path d="M0.00 2.30L2.99 -2.55L0.00 -7.41L-2.99 -2.55ZM-0.00 2.30L2.99 7.15L8.96 7.15L5.98 2.30ZM0.00 2.30L-5.98 2.30L-8.96 7.15L-2.99 7.15Z" fill="#e6e6ec" stroke="#302e38" stroke-width=".45"/><circle cx="4.6" cy="-4.6" r="2.7" fill="#dcc454" stroke="#e0703a" stroke-width=".7"/><rect x="3.4" y="-2" width="2.4" height="2.4" fill="#e0843a"/></svg>
<svg style="left:1592.0px;top:892.0px" width="22" height="22" viewBox="-11.0 -11.0 22 22"><path d="M0.00 2.30L2.99 -2.55L0.00 -7.41L-2.99 -2.55ZM-0.00 2.30L2.99 7.15L8.96 7.15L5.98 2.30ZM0.00 2.30L-5.98 2.30L-8.96 7.15L-2.99 7.15Z" fill="#e6e6ec" stroke="#302e38" stroke-width=".45"/><path d="M5 -7.6L1.8 -2.6H4L2.6 1.4L7 -4.2H4.6Z" fill="#4a80f0"/></svg>
<svg style="left:1619.0px;top:892.0px" width="22" height="22" viewBox="-11.0 -11.0 22 22"><rect x="-6.5" y="-7.5" width="13" height="15" rx="1" fill="#e6e6ec"/><path d="M-4.6 -4.2H-3M-1.4 -4.2H4.8M-4.6 -1.4H-3M-1.4 -1.4H4.8M-4.6 1.4H-3M-1.4 1.4H4.8M-4.6 4.2H-3M-1.4 4.2H4.8" stroke="#302e38" stroke-width="1.3" fill="none" /></svg>
<svg style="left:1696.0px;top:892.0px" width="22" height="22" viewBox="-11.0 -11.0 22 22"><rect x="-1.7" y="-8" width="3.4" height="4" fill="#e6e6ec" transform="rotate(0)"/><rect x="-1.7" y="-8" width="3.4" height="4" fill="#e6e6ec" transform="rotate(45)"/><rect x="-1.7" y="-8" width="3.4" height="4" fill="#e6e6ec" transform="rotate(90)"/><rect x="-1.7" y="-8" width="3.4" height="4" fill="#e6e6ec" transform="rotate(135)"/><rect x="-1.7" y="-8" width="3.4" height="4" fill="#e6e6ec" transform="rotate(180)"/><rect x="-1.7" y="-8" width="3.4" height="4" fill="#e6e6ec" transform="rotate(225)"/><rect x="-1.7" y="-8" width="3.4" height="4" fill="#e6e6ec" transform="rotate(270)"/><rect x="-1.7" y="-8" width="3.4" height="4" fill="#e6e6ec" transform="rotate(315)"/><circle r="4.6" fill="none" stroke="#e6e6ec" stroke-width="3.2"/></svg>
<svg style="left:1718.0px;top:892.0px" width="22" height="22" viewBox="-11.0 -11.0 22 22"><rect x="-8" y="-0.5" width="11.5" height="8.5" fill="#4fa79d"/><circle cx="-2.2" cy="3.6" r="1.3" fill="#302e38"/><path d="M0.8 -0.5V-3.6A3.3 3.3 0 0 1 7.4 -3.6V-1" stroke="#3d63e8" stroke-width="1.7" fill="none" /></svg>
<svg style="left:1739.0px;top:892.0px" width="22" height="22" viewBox="-11.0 -11.0 22 22"><path d="M0 -8.2A5 5 0 0 1 3 0.2V2.6H-3V0.2A5 5 0 0 1 0 -8.2Z" fill="#3d63e8"/><rect x="-2.2" y="3.4" width="4.4" height="1.6" fill="#3d63e8"/><rect x="-1.6" y="5.8" width="3.2" height="1.8" fill="#3d63e8"/></svg>
<svg style="left:1760.0px;top:892.0px" width="22" height="22" viewBox="-11.0 -11.0 22 22"><path d="M-5 6.2A7.4 7.4 0 1 1 5 6.2" stroke="#e6e6ec" stroke-width="1.3" fill="none" /><path d="M0 1.5L-4.4 -4" stroke="#e6e6ec" stroke-width="1.4" fill="none" /></svg>
<svg style="left:1781.0px;top:892.0px" width="22" height="22" viewBox="-11.0 -11.0 22 22"><rect x="-7" y="-7" width="14" height="14" fill="none" stroke="#e6e6ec" stroke-width="1.2"/><path d="M-3.6 3.6L3.6 -3.6M0 -4H4V0M-4 0V4H0" stroke="#e6e6ec" stroke-width="1.2" fill="none" /></svg>
<svg style="left:1801.5px;top:892.0px" width="22" height="22" viewBox="-11.0 -11.0 22 22"><path d="M-7 -6.5V7.5H1M-7 -6.5H2M-4.6 -3H0.5M-4.6 0H0M-4.6 3H-1" stroke="#3d63e8" stroke-width="1.3" fill="none" /><path d="M5.5 -7.5L8 -5L1.5 3L-1.2 4L-0.4 1Z" fill="#3d63e8"/></svg>
<svg style="left:1824.0px;top:892.0px" width="22" height="22" viewBox="-11.0 -11.0 22 22"><path d="M-7 -1A7 7 0 0 1 5 -5.2M7 1A7 7 0 0 1 -5 5.2" stroke="#e6e6ec" stroke-width="1.4" fill="none" /><path d="M3 -8.2L8 -7.4L6.4 -2.4Z" fill="#e6e6ec"/><path d="M-3 8.2L-8 7.4L-6.4 2.4Z" fill="#e6e6ec"/></svg>
<svg style="left:1780px;top:870px;z-index:20" width="70" height="40" viewBox="1780 870 70 40"><path d="M1797.5 881 L1814.5 898 V881 Z" fill="#fdfdfd" stroke="#000" stroke-width="1.2"/><path d="M1817 881 L1835.5 900 V881 Z" fill="#fdfdfd" stroke="#000" stroke-width="1.2"/></svg>
<div style="position:absolute;background:#fdfdfd;border:1.3px solid #000;border-radius:10px;left:1590px;top:771.2px;width:120px;height:111.3px;z-index:21"></div>
<div style="position:absolute;background:#fdfdfd;border:1.3px solid #000;border-radius:10px;left:1648px;top:771.2px;width:225px;height:111.3px;z-index:23"></div>
<div class="abs" style="left:1798.6px;top:878px;width:15.2px;height:4.8px;background:#fdfdfd;z-index:24"></div>
<div class="abs" style="left:1818.2px;top:878px;width:16.6px;height:4.8px;background:#fdfdfd;z-index:24"></div>
<div style="position:absolute;left:1591px;top:773px;width:57px;height:108px;overflow:hidden;z-index:22"><div class="abs" style="left:18px;top:46px;font-size:13.4px;line-height:18px;color:#333;white-space:nowrap">浩辰CAD</div><div class="abs" style="left:18px;top:75px;font-size:13.4px;line-height:18px;color:#1818b8;font-weight:500;text-decoration:underline;white-space:nowrap">去看看</div></div>
<div class="abs" style="left:1611.0px;top:791px;width:19px;height:19px;border-radius:50%;background:#1c1ce4;box-shadow:0 0 1.5px #6a6af0;z-index:25"></div><div class="abs" style="left:1619.1px;top:794.6px;width:2.8px;height:2.8px;border-radius:50%;background:#fff;z-index:26"></div><div class="abs" style="left:1619.2px;top:798.6px;width:2.6px;height:7.4px;background:#fff;z-index:26"></div>
<div class="abs" style="left:1669.0px;top:791px;width:19px;height:19px;border-radius:50%;background:#1c1ce4;box-shadow:0 0 1.5px #6a6af0;z-index:25"></div><div class="abs" style="left:1677.1px;top:794.6px;width:2.8px;height:2.8px;border-radius:50%;background:#fff;z-index:26"></div><div class="abs" style="left:1677.2px;top:798.6px;width:2.6px;height:7.4px;background:#fff;z-index:26"></div>
<div class="abs" style="left:1705px;top:791.5px;font-size:13.7px;line-height:18px;font-weight:bold;color:#111;white-space:nowrap;z-index:25">发现新版本 26.2.1.0</div>
<div class="abs" style="left:1845.5px;top:790.5px;width:19.5px;height:19.5px;border:1px solid #a8a8a8;background:#fdfdfd;z-index:25"></div>
<svg style="left:1845.5px;top:790.5px;z-index:26" width="19.5" height="19.5" viewBox="0 0 19.5 19.5"><path d="M4.8 4.8 L14.7 14.7 M14.7 4.8 L4.8 14.7" stroke="#000" stroke-width="2.1" fill="none"/></svg>
<div class="abs" style="left:1667px;top:820px;font-size:13.4px;line-height:18px;color:#333;white-space:nowrap;z-index:25">升级以体验功能优化与性能改进</div>
<div class="abs" style="left:1667px;top:848px;font-size:13.4px;line-height:18px;color:#1818b8;font-weight:500;text-decoration:underline;white-space:nowrap;z-index:25">立即更新</div>
</body></html>
